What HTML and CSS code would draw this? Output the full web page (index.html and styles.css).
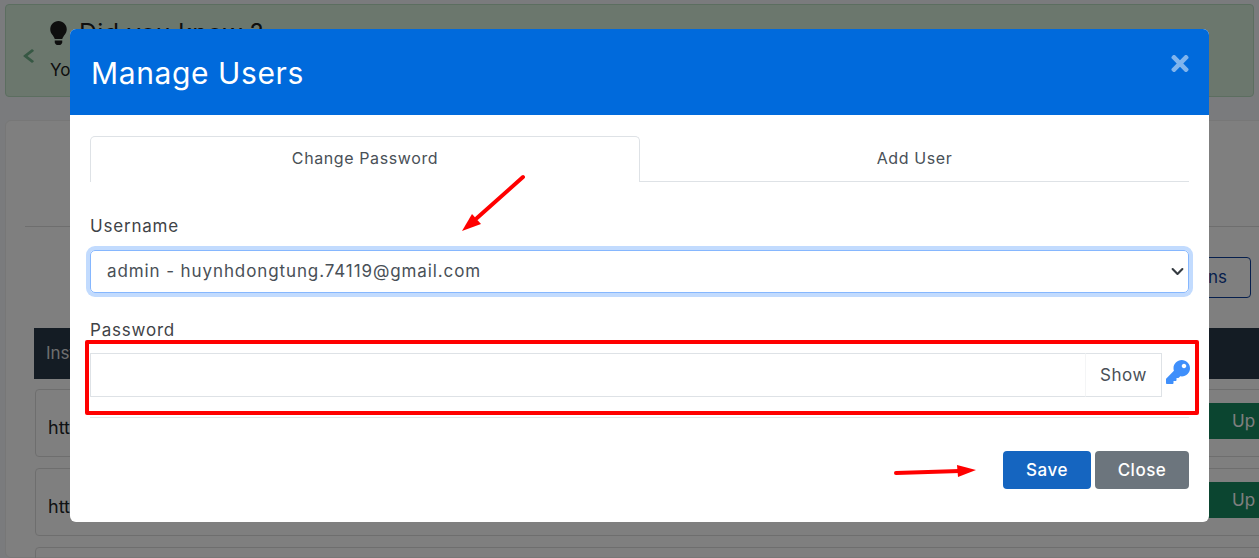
FILE: index.html
```html
<!DOCTYPE html>
<html lang="en">
<head>
	<meta charset="UTF-8">
	<title>Manage Users</title>
	<link rel="stylesheet" href="styles.css">
</head>
<body>
	<div class="page">
		<div class="tip">
			<span class="tip-prev">
				<svg viewBox="20 30 275 452" width="11" height="14" preserveAspectRatio="none"><path fill="currentColor" d="M34.52 239.03L228.87 44.69c9.37-9.37 24.57-9.37 33.94 0l22.67 22.67c9.36 9.36 9.37 24.52.04 33.9L131.49 256l154.02 154.75c9.34 9.38 9.32 24.54-.04 33.9l-22.67 22.67c-9.37 9.37-24.57 9.37-33.94 0L34.52 272.97c-9.37-9.37-9.37-24.57 0-33.94z"/></svg>
			</span>
			<div class="tip-text">
				<div class="tip-title">
					<svg viewBox="0 0 352 512" width="17" height="24"><path fill="currentColor" d="M96.06 454.35c.01 6.29 1.87 12.45 5.36 17.69l17.09 25.69a31.99 31.99 0 0 0 26.64 14.28h61.71a31.99 31.99 0 0 0 26.64-14.28l17.09-25.69a31.989 31.989 0 0 0 5.36-17.69l.04-38.35H96.01l.05 38.35zM0 176c0 44.37 16.45 84.85 43.56 115.78 16.52 18.85 42.36 58.23 52.21 91.45.04.26.07.52.11.78h160.24c.04-.26.07-.51.11-.78 9.85-33.22 35.69-72.6 52.21-91.45C335.55 260.85 352 220.37 352 176 352 78.61 272.91-.3 175.45 0 73.44.31 0 82.97 0 176z"/></svg>
					<span>Did you know ?</span>
				</div>
				<p class="tip-body">You can manage users here</p>
			</div>
		</div>
		<div class="card">
			<div class="card-rule"></div>
			<div class="card-actions"><span class="outline-btn">Actions</span></div>
			<div class="table-head">Instance</div>
			<div class="row"><span>https://</span><span class="up-btn">Up</span></div>
			<div class="row"><span>https://</span><span class="up-btn">Up</span></div>
			<div class="row"></div>
		</div>
	</div>

	<div class="backdrop"></div>

	<div class="modal">
		<div class="modal-header">
			<h2>Manage Users</h2>
			<svg class="modal-close" viewBox="0 0 352 512" width="18" height="25"><path fill="currentColor" d="M242.72 256l100.07-100.07c12.28-12.28 12.28-32.19 0-44.48l-22.24-22.24c-12.28-12.28-32.19-12.28-44.48 0L176 189.28 75.93 89.21c-12.28-12.28-32.19-12.28-44.48 0L9.21 111.45c-12.28 12.28-12.28 32.19 0 44.48L109.28 256 9.21 356.07c-12.28 12.28-12.28 32.19 0 44.48l22.24 22.24c12.28 12.28 32.2 12.28 44.48 0L176 322.72l100.07 100.07c12.28 12.28 32.2 12.28 44.48 0l22.24-22.24c12.28-12.28 12.28-32.19 0-44.48L242.72 256z"/></svg>
		</div>
		<div class="modal-body">
			<div class="tabs">
				<div class="tab active">Change Password</div>
				<div class="tab">Add User</div>
			</div>
			<label class="field-label first">Username</label>
			<div class="select">
				<span>admin - huynhdongtung.74119@gmail.com</span>
				<svg viewBox="0 0 16 16" width="13" height="13"><path fill="none" stroke="#343a40" stroke-linecap="round" stroke-linejoin="round" stroke-width="2.6" d="M2 5l6 6 6-6"/></svg>
			</div>
			<label class="field-label second">Password</label>
			<div class="password-row">
				<div class="password-input"></div>
				<div class="password-show">Show</div>
				<svg class="key" viewBox="0 0 512 512" width="24" height="24"><path fill="currentColor" d="M512 176.001C512 273.203 433.202 352 336 352c-11.22 0-22.19-1.062-32.827-3.069l-24.012 27.014A23.999 23.999 0 0 1 261.223 384H224v40c0 13.255-10.745 24-24 24h-40v40c0 13.255-10.745 24-24 24H24c-13.255 0-24-10.745-24-24v-78.059c0-6.365 2.529-12.47 7.029-16.971l161.802-161.802C163.108 213.814 160 195.271 160 176 160 78.798 238.797.001 335.999 0 433.488-.001 512 78.511 512 176.001zM336 128c0 26.51 21.49 48 48 48s48-21.49 48-48-21.49-48-48-48-48 21.49-48 48z"/></svg>
			</div>
			<div class="modal-rule"></div>
			<div class="modal-footer">
				<button class="btn save">Save</button>
				<button class="btn close">Close</button>
			</div>
		</div>
	</div>

	<!-- red marks drawn on top of the screenshot -->
	<div class="mark-box"></div>
	<svg class="marks" width="1259" height="558" viewBox="0 0 1259 558">
		<path d="M523 177L477 218" stroke="#f00" stroke-width="4" stroke-linecap="round" fill="none"/>
		<path d="M462 231L472 214L481 224Z" fill="#f00"/>
		<path d="M896 473L960 471" stroke="#f00" stroke-width="4" stroke-linecap="round" fill="none"/>
		<path d="M976 470L957 465L958 477Z" fill="#f00"/>
	</svg>
</body>
</html>
```

FILE: styles.css
```css
*{
	margin: 0;
	padding: 0;
	box-sizing: border-box;
}
html,body{
	height: 558px;
	overflow: hidden;
}
body{
	font-family: "Inter", "Liberation Sans", sans-serif;
	font-size: 17px;
	color: #212529;
	background: #f4f7fa;
	position: relative;
}
.page{
	height: 558px;
	overflow: hidden;
	padding: 4px 5px 0;
}
.tip{
	height: 93px;
	display: flex;
	align-items: center;
	background: #d6eedb;
	border: 1px solid #b8dcc0;
	border-radius: 4px;
	padding-left: 17px;
	color: #1c1c1c;
}
.tip-prev{
	color: #6fb088;
	display: flex;
	margin-top: 10px;
}
.tip-text{
	margin-left: 16px;
}
.tip-title{
	display: flex;
	align-items: center;
	gap: 12px;
	font-size: 25px;
	letter-spacing: 0.3px;
	margin-bottom: 12px;
	margin-top: -4px;
}
.tip-body{
	font-size: 17px;
}
.card{
	margin: 23px -20px 0 0;
	height: 438px;
	background: #fff;
	border: 1px solid #eee;
	border-radius: 6px;
	padding: 105px 4px 0 19px;
}
.card-rule{
	height: 1px;
	background: #ddd;
}
.card-actions{
	display: flex;
	justify-content: flex-end;
	margin: 30px 18px 0 0;
	height: 41px;
}
.outline-btn{
	border: 1px solid #0d3f9a;
	border-radius: 4px;
	color: #0d3f9a;
	padding: 0 23px;
	line-height: 39px;
}
.table-head{
	margin: 30px 0 -1px 9px;
	height: 51px;
	line-height: 51px;
	padding-left: 12px;
	background: #283848;
	color: #ddd;
}
.row{
	margin: 11px 0 0 10px;
	height: 68px;
	display: flex;
	align-items: center;
	justify-content: space-between;
	padding-left: 12px;
	border: 1px solid #ddd;
	border-radius: 4px;
}
.row > span:first-child{
	padding-top: 8px;
	font-size: 18px;
}
.up-btn{
	background: #168a60;
	color: #fff;
	width: 60px;
	height: 36px;
	line-height: 36px;
	padding-left: 24px;
	margin-bottom: 4px;
}
.backdrop{
	position: absolute;
	top: 0;
	left: 0;
	width: 100%;
	height: 100%;
	background: rgba(0,0,0,0.5);
}
.modal{
	position: absolute;
	top: 29px;
	left: 70px;
	width: 1139px;
	height: 493px;
	background: #fff;
	border-radius: 6px;
	overflow: hidden;
}
.modal-header{
	height: 86px;
	background: #006adc;
	display: flex;
	align-items: center;
	justify-content: space-between;
	padding: 0 20px 0 21px;
}
.modal-header h2{
	font-size: 30px;
	font-weight: 400;
	letter-spacing: 0.6px;
	margin-top: 1px;
	color: #fff;
}
.modal-close{
	color: #80b4ed;
	margin-bottom: 17px;
}
.modal-body{
	padding: 21px 20px 0;
}
.tabs{
	display: flex;
	height: 46px;
	border-bottom: 1px solid #dee2e6;
}
.tab{
	flex: 1;
	text-align: center;
	font-size: 16px;
	letter-spacing: 0.6px;
	line-height: 43px;
	padding-top: 1px;
	color: #495057;
	height: 46px;
}
.tab.active{
	flex: none;
	width: 550px;
	padding-top: 0;
	background: #fff;
	border: 1px solid #dee2e6;
	border-bottom: 0;
	border-radius: 5px 5px 0 0;
}
.field-label{
	display: block;
	height: 24px;
	line-height: 24px;
	font-size: 17px;
	letter-spacing: 0.8px;
	color: #3f4347;
}
.field-label.first{
	margin-top: 32px;
}
.field-label.second{
	margin-top: 25px;
}
.select{
	margin-top: 12px;
	height: 43px;
	display: flex;
	align-items: center;
	justify-content: space-between;
	padding: 0 4px 0 16px;
	border: 1px solid #86b7fe;
	border-radius: 5px;
	box-shadow: 0 0 0 4px #c2dbfe;
	font-size: 17px;
	letter-spacing: 0.9px;
	color: #495057;
}
.select span{
	margin-top: -2px;
}
.password-row{
	margin: 11px -1px 0 0;
	display: flex;
	align-items: center;
	height: 44px;
}
.password-input{
	flex: 1;
	height: 44px;
	border: 1px solid #dee2e6;
	border-right: 0;
}
.password-show{
	width: 77px;
	height: 44px;
	line-height: 42px;
	text-align: center;
	border: 1px solid #dee2e6;
	border-left-color: #f4f5f6;
	letter-spacing: 0.6px;
	color: #495057;
}
.key{
	color: #3f8ffb;
	margin: 0 0 6px 4px;
	flex: none;
	width: 24px;
}
.modal-rule{
	margin-top: 20px;
	height: 1px;
	background: #e4e6e9;
}
.modal-footer{
	margin-top: 33px;
	display: flex;
	justify-content: flex-end;
	gap: 4px;
}
.btn{
	height: 38px;
	border: 0;
	border-radius: 4px;
	color: #fff;
	font-family: inherit;
	font-size: 17px;
	font-weight: 500;
	letter-spacing: 0.5px;
}
.save{
	width: 88px;
	background: #1565c0;
}
.close{
	width: 94px;
	background: #6c757d;
}
.mark-box{
	position: absolute;
	left: 85px;
	top: 340px;
	width: 1114px;
	height: 75px;
	border: 4px solid #f00;
	border-radius: 2px;
}
.marks{
	position: absolute;
	top: 0;
	left: 0;
}
```
